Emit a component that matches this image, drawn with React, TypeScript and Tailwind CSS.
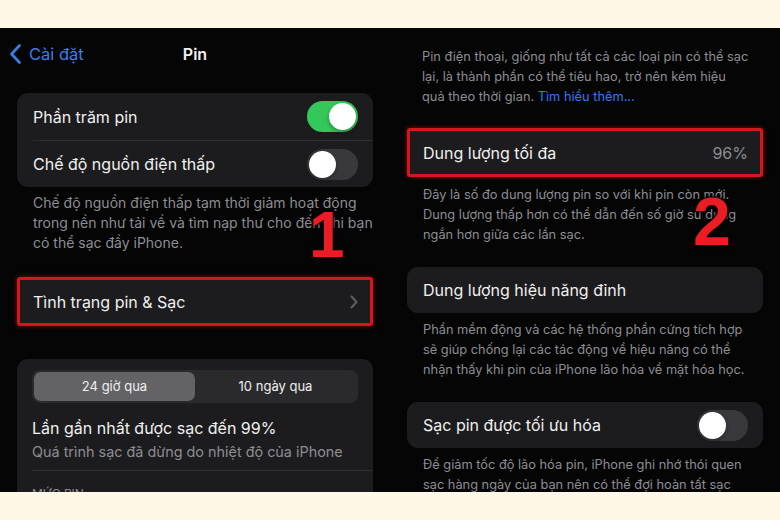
import React from "react";

const font = "font-['Inter','Noto_Sans',sans-serif]";

function Toggle({ on }: { on: boolean }) {
  return (
    <div
      className={`w-[51px] h-[31px] shrink-0 rounded-full p-[2px] flex ${
        on ? "bg-[#34c759] justify-end" : "bg-[#39393d] justify-start"
      }`}
    >
      <div className="w-[27px] h-[27px] rounded-full bg-white shadow-[0_2px_4px_rgba(0,0,0,0.3)]" />
    </div>
  );
}

function Lines({ lines, className = "" }: { lines: React.ReactNode[]; className?: string }) {
  return (
    <div className={`leading-[20px] text-[#8d8d93] ${className}`}>
      {lines.map((l, i) => (
        <div key={i} className="whitespace-nowrap">
          {l}
        </div>
      ))}
    </div>
  );
}

const numCls =
  "absolute font-['Liberation_Sans',sans-serif] font-bold leading-none text-[#ec1c24] [text-shadow:0_0_2px_#000,0_0_3px_#000,0_0_4px_#000]";

function LeftPanel() {
  return (
    <div className="relative w-[390px] h-full bg-[#050505] overflow-hidden flex flex-col [&>*]:shrink-0">
      <div className="mt-[2px] h-[48px] grid grid-cols-[1fr_auto_1fr] items-center">
        <div className="flex items-center pl-[9px] gap-[7px] text-[#3b7fe6] text-[16.5px]">
          <svg width="13" height="20" viewBox="0 0 13 20" fill="none">
            <path d="M10.5 1.5 L2.5 10 L10.5 18.5" stroke="#3b7fe6" strokeWidth="2.6" strokeLinecap="round" strokeLinejoin="round" />
          </svg>
          <span>Cài đặt</span>
        </div>
        <div className="text-[16px] font-semibold text-[#f2f2f2]">Pin</div>
        <div />
      </div>

      <div className="mt-[15px] mx-[17px] rounded-[11px] bg-[#1c1c1e] text-[#f0f0f0] text-[16px]">
        <div className="h-[47px] flex items-center justify-between pl-[16px] pr-[15px]">
          <span>Phần trăm pin</span>
          <Toggle on />
        </div>
        <div className="ml-[16px] h-px bg-[#2e2e31]" />
        <div className="h-[46px] flex items-center justify-between pl-[16px] pr-[15px]">
          <span>Chế độ nguồn điện thấp</span>
          <Toggle on={false} />
        </div>
      </div>

      <Lines
        className="mt-[6px] px-[33px] text-[14px]"
        lines={[
          "Chế độ nguồn điện thấp tạm thời giảm hoạt động",
          "trong nền như tải về và tìm nạp thư cho đến khi bạn",
          "có thể sạc đầy iPhone.",
        ]}
      />

      <div className="mt-[24px] mx-[17px] h-[49px] rounded-[3px] bg-[#1c1c1e] border-[3px] border-[#d8141c] shadow-[0_0_5px_rgba(230,20,30,0.55)] flex items-center justify-between pl-[13px] pr-[12px] text-[16px] text-[#f0f0f0]">
        <span>Tình trạng pin &amp; Sạc</span>
        <svg width="8" height="14" viewBox="0 0 8 14" fill="none">
          <path d="M1.5 1.5 L6.5 7 L1.5 12.5" stroke="#5f5f64" strokeWidth="2" strokeLinecap="round" strokeLinejoin="round" />
        </svg>
      </div>

      <div className="mt-[33px] mx-[17px] h-[200px] rounded-t-[11px] bg-[#1c1c1e] flex flex-col [&>*]:shrink-0">
        <div className="mt-[11px] mx-[15px] h-[33px] rounded-[8px] bg-[#2a2a2c] p-[2px] grid grid-cols-2 text-[13px] text-[#f0f0f0]">
          <div className="rounded-[7px] bg-[#636366] flex items-center justify-center">24 giờ qua</div>
          <div className="flex items-center justify-center">10 ngày qua</div>
        </div>
        <div className="mt-[13px] pl-[15px] text-[16px] leading-[24px] text-[#f0f0f0] whitespace-nowrap">
          Lần gần nhất được sạc đến 99%
        </div>
        <div className="pl-[15px] text-[14.4px] leading-[24px] text-[#8d8d93] whitespace-nowrap">
          Quá trình sạc đã dừng do nhiệt độ của iPhone
        </div>
        <div className="mt-[6px] ml-[15px] h-px bg-[#2e2e31]" />
        <div className="mt-[15px] pl-[15px] text-[12px] leading-[16px] text-[#8d8d93]">MỨC PIN</div>
      </div>

      <div className={`${numCls} left-[309px] top-[175px] text-[64px]`}>1</div>
    </div>
  );
}

function RightPanel() {
  return (
    <div className="relative w-[390px] h-full bg-[#050505] overflow-hidden flex flex-col [&>*]:shrink-0">
      <Lines
        className="mt-[19px] px-[32px] text-[12.8px]"
        lines={[
          "Pin điện thoại, giống như tất cả các loại pin có thể sạc",
          "lại, là thành phần có thể tiêu hao, trở nên kém hiệu",
          <>
            quả theo thời gian. <span className="text-[#3478f6]">Tìm hiểu thêm...</span>
          </>,
        ]}
      />

      <div className="mt-[21px] mx-[17px] h-[49px] rounded-[3px] bg-[#1c1c1e] border-[3px] border-[#d8141c] shadow-[0_0_5px_rgba(230,20,30,0.55)] flex items-center justify-between pl-[13px] pr-[12px] text-[16px]">
        <span className="text-[#f0f0f0]">Dung lượng tối đa</span>
        <span className="text-[#8d8d93]">96%</span>
      </div>

      <Lines
        className="mt-[8px] px-[33px] text-[12.8px]"
        lines={[
          "Đây là số đo dung lượng pin so với khi pin còn mới.",
          "Dung lượng thấp hơn có thể dẫn đến số giờ sử dụng",
          "ngắn hơn giữa các lần sạc.",
        ]}
      />

      <div className="mt-[22px] mx-[17px] h-[46px] rounded-[11px] bg-[#1c1c1e] flex items-center pl-[16px] text-[16px] text-[#f0f0f0]">
        Dung lượng hiệu năng đỉnh
      </div>

      <Lines
        className="mt-[7px] px-[33px] text-[12.8px]"
        lines={[
          "Phần mềm động và các hệ thống phần cứng tích hợp",
          "sẽ giúp chống lại các tác động về hiệu năng có thể",
          "nhận thấy khi pin của iPhone lão hóa về mặt hóa học.",
        ]}
      />

      <div className="mt-[22px] mx-[17px] h-[46px] rounded-[11px] bg-[#1c1c1e] flex items-center justify-between pl-[16px] pr-[15px] text-[16px] text-[#f0f0f0]">
        <span>Sạc pin được tối ưu hóa</span>
        <Toggle on={false} />
      </div>

      <Lines
        className="mt-[7px] px-[33px] text-[12.8px]"
        lines={[
          "Để giảm tốc độ lão hóa pin, iPhone ghi nhớ thói quen",
          "sạc hàng ngày của bạn nên có thể đợi hoàn tất sạc",
          "cho đến khi bạn cần sử dụng.",
        ]}
      />

      <div className={`${numCls} left-[303px] top-[159px] text-[68px]`}>2</div>
    </div>
  );
}

export default function App() {
  return (
    <div className={`w-[780px] h-[520px] bg-[#fff8e7] flex flex-col ${font}`}>
      <div className="h-[28px] shrink-0" />
      <div className="h-[464px] shrink-0 flex">
        <LeftPanel />
        <RightPanel />
      </div>
      <div className="h-[28px] shrink-0" />
    </div>
  );
}
